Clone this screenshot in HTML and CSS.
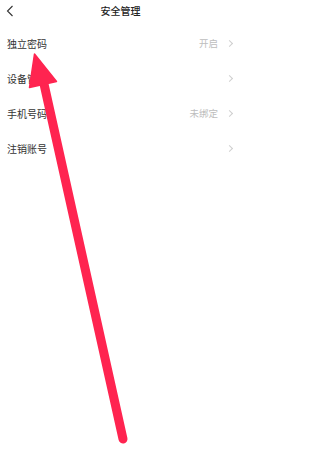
FILE: index.html
```html
<!DOCTYPE html>
<html lang="zh">
<head>
<meta charset="utf-8">
<link rel="stylesheet" href="styles.css">
</head>
<body>
<div class="page">
  <header class="topbar">
    <svg class="back" width="8" height="12" viewBox="0 0 8 12"><path d="M6.5 1 L1.5 6 L6.5 11" fill="none" stroke="#333" stroke-width="1.1"/></svg>
    <div class="title">安全管理</div>
  </header>
  <ul class="list">
    <li class="row"><span class="label">独立密码</span><span class="value">开启</span><span class="chev"></span></li>
    <li class="row"><span class="label">设备管理</span><span class="value"></span><span class="chev"></span></li>
    <li class="row"><span class="label">手机号码</span><span class="value">未绑定</span><span class="chev"></span></li>
    <li class="row"><span class="label">注销账号</span><span class="value"></span><span class="chev"></span></li>
  </ul>
  <svg class="arrow" width="241" height="459" viewBox="0 0 241 459">
    <line x1="123" y1="439" x2="44" y2="84" stroke="#ff2450" stroke-width="9" stroke-linecap="round"/>
    <polygon points="34.5,54 29.5,87.5 56.5,81.5" fill="#ff2450" stroke="#ff2450" stroke-width="1.5" stroke-linejoin="round"/>
  </svg>
</div>
</body>
</html>
```
FILE: styles.css
```css
html, body {
  margin: 0;
  padding: 0;
  background: #fff;
}
.page {
  position: relative;
  width: 241px;
  height: 459px;
  overflow: hidden;
  font-family: "Noto Sans CJK SC", "Noto Sans", sans-serif;
}
.topbar {
  position: relative;
  height: 26px;
  display: flex;
  align-items: center;
  justify-content: center;
}
.back {
  position: absolute;
  left: 6px;
  top: 5px;
}
.title {
  font-size: 10px;
  font-weight: 500;
  color: #222;
  line-height: 1;
  margin-top: -4px;
}
.list {
  list-style: none;
  margin: 0;
  padding: 0;
}
.row {
  height: 35px;
  display: flex;
  align-items: center;
  padding: 0 9px 0 7px;
}
.label {
  flex: 1;
  font-size: 10px;
  color: #333;
  line-height: 1;
}
.value {
  font-size: 9.5px;
  color: #bdbdbd;
  line-height: 1;
  margin-right: 9px;
}
.chev {
  width: 4px;
  height: 4px;
  border-top: 1px solid #cfcfcf;
  border-right: 1px solid #cfcfcf;
  transform: rotate(45deg);
}
.arrow {
  position: absolute;
  left: 0;
  top: 0;
}
```
